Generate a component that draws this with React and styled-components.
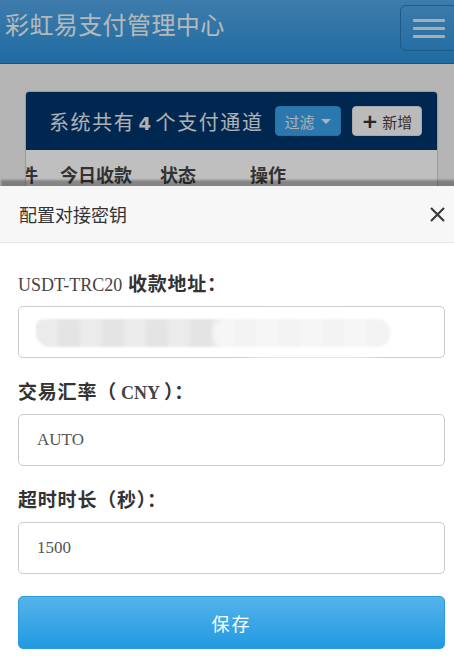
import React from "react";
import styled, { createGlobalStyle } from "styled-components";

const GlobalStyle = createGlobalStyle`
  html, body {
    margin: 0;
    padding: 0;
    overflow: hidden;
    background: #f0f0f0;
  }
  * { box-sizing: border-box; }
`;

const CJK = `"Liberation Serif", "Noto Sans CJK SC", serif`;

const Stage = styled.div`
  position: relative;
  width: 463px;
  height: 656px;
  overflow: hidden;
  background: #f0f0f0;
  font-family: ${CJK};
`;

const Navbar = styled.header`
  height: 64px;
  display: flex;
  justify-content: space-between;
  align-items: flex-start;
  padding: 0 5px;
  background: linear-gradient(#52a6e5, #2a8fd8);
  border-bottom: 1px solid #1f6fae;
`;

const Brand = styled.div`
  margin-top: 11px;
  font-size: 24px;
  line-height: 30px;
  color: #f4f6f8;
  letter-spacing: 0.4px;
`;

const Toggle = styled.button`
  margin-top: 5px;
  width: 58px;
  height: 46px;
  border: 1px solid #2378bb;
  border-radius: 6px;
  background: transparent;
  display: flex;
  flex-direction: column;
  align-items: center;
  justify-content: center;
  gap: 5px;
  padding: 0;
`;

const Bar = styled.span`
  display: block;
  width: 32px;
  height: 3px;
  border-radius: 1px;
  background: #e6e6e6;
`;

const Content = styled.main`
  padding: 27px 25px 0;
`;

const Panel = styled.section`
  border: 1px solid #cfcfcf;
  border-radius: 4px;
  background: #ffffff;
  overflow: hidden;
`;

const PanelHeading = styled.div`
  height: 58px;
  display: flex;
  align-items: center;
  gap: 11px;
  padding: 0 22px 0 23px;
  background: #00356b;
  color: #e8ecf0;
  font-size: 20px;
  white-space: nowrap;
`;

const HeadingText = styled.span`
  flex: none;
  letter-spacing: 1.6px;
`;

const Count = styled.b`
  font-family: "DejaVu Sans", sans-serif;
  font-size: 18px;
  margin: 0 3px;
`;

const SmallButton = styled.span`
  flex: none;
  height: 30px;
  display: inline-flex;
  align-items: center;
  justify-content: center;
  gap: 4px;
  padding: 0 9px;
  border-radius: 4px;
  font-size: 15px;
  background: ${(p) => (p.$light ? "#fafafa" : "#38a0e8")};
  color: ${(p) => (p.$light ? "#444" : "#e6eef6")};
  border: 1px solid ${(p) => (p.$light ? "#e0e0e0" : "#3096dc")};
`;

const Caret = styled.span`
  width: 0;
  height: 0;
  border-left: 5px solid transparent;
  border-right: 5px solid transparent;
  border-top: 5px solid currentColor;
  margin-left: 2px;
`;

const Plus = styled.b`
  font-family: "DejaVu Sans", sans-serif;
  font-size: 20px;
  line-height: 1;
  color: #333;
`;

const HeadRow = styled.div`
  display: flex;
  padding-top: 13px;
  font-size: 18px;
  font-weight: 700;
  line-height: 26px;
  color: #444;
  white-space: nowrap;
`;

/* the table is scrolled sideways, so the first column shows only its tail */
const HeadCell = styled.div`
  width: ${(p) => p.$w}px;
  flex: none;
  overflow: hidden;
  display: flex;
  justify-content: ${(p) => (p.$tail ? "flex-end" : "flex-start")};
  margin-right: ${(p) => p.$after || 0}px;
`;

const Backdrop = styled.div`
  position: absolute;
  inset: 0;
  background: rgba(0, 0, 0, 0.25);
  z-index: 1;
`;

const Sheet = styled.div`
  position: absolute;
  top: 186px;
  left: 0;
  right: 0;
  bottom: 0;
  z-index: 2;
  background: #ffffff;
  box-shadow: 0 -7px 2px -1px rgba(0, 0, 0, 0.3);
`;

const SheetHeader = styled.div`
  height: 57px;
  display: flex;
  align-items: center;
  justify-content: space-between;
  padding: 0 17px 0 19px;
  background: #f7f7f7;
  border-bottom: 1px solid #e8e8e8;
`;

const SheetTitle = styled.h4`
  margin: 0;
  font-size: 18px;
  font-weight: 400;
  color: #333;
`;

const Close = styled.button`
  width: 17px;
  height: 17px;
  padding: 0;
  border: 0;
  background: transparent;
  display: flex;
`;

const SheetBody = styled.form`
  padding: 29px 18px 0;
  display: flex;
  flex-direction: column;
  gap: 22px;
`;

const Field = styled.div`
  display: flex;
  flex-direction: column;
  gap: 8px;
`;

const Label = styled.label`
  font-size: 19px;
  line-height: 26px;
  font-weight: 700;
  color: #333;
  letter-spacing: 0.8px;
`;

const Latin = styled.span`
  font-size: 18px;
  font-weight: ${(p) => (p.$bold ? 700 : 400)};
  color: #444;
  letter-spacing: 0;
  margin: 0 ${(p) => (p.$pad ? 4 : 0)}px;
`;

const InputWrap = styled.div`
  position: relative;
`;

const Input = styled.input`
  width: 100%;
  height: 52px;
  padding: 0 18px;
  border: 1px solid #cccccc;
  border-radius: 5px;
  background: #fff;
  font-family: "Liberation Serif", serif;
  font-size: 17px;
  color: #555;
  outline: none;
`;

const Smudge = styled.span`
  position: absolute;
  left: 18px;
  top: 13px;
  width: 355px;
  height: 28px;
  border-radius: 8px 14px 14px 14px;
  background: repeating-linear-gradient(
    90deg,
    #ebebeb 0 22px,
    #e4e4e4 22px 44px
  );
  filter: blur(1.2px);
`;

const Wipe = styled.span`
  position: absolute;
  left: 195px;
  top: 2px;
  width: 195px;
  height: 54px;
  border-radius: 40% 50% 45% 45%;
  background: rgba(255, 255, 255, 0.55);
  filter: blur(2px);
`;

const SaveButton = styled.button`
  height: 53px;
  border: 1px solid #2a9be0;
  border-radius: 5px;
  background: linear-gradient(#55b4eb, #2299e1);
  color: #fff;
  font-family: ${CJK};
  font-size: 18px;
  letter-spacing: 2px;
`;

export default function App() {
  return (
    <Stage>
      <GlobalStyle />
      <Navbar>
        <Brand>彩虹易支付管理中心</Brand>
        <Toggle aria-label="menu">
          <Bar />
          <Bar />
          <Bar />
        </Toggle>
      </Navbar>

      <Content>
        <Panel>
          <PanelHeading>
            <HeadingText>
              系统共有<Count>4</Count>个支付通道
            </HeadingText>
            <SmallButton>
              过滤
              <Caret />
            </SmallButton>
            <SmallButton $light>
              <Plus>+</Plus>新增
            </SmallButton>
          </PanelHeading>
          <HeadRow>
            <HeadCell $w={12} $tail $after={22}>
              件
            </HeadCell>
            <HeadCell $w={100}>今日收款</HeadCell>
            <HeadCell $w={90}>状态</HeadCell>
            <HeadCell $w={60}>操作</HeadCell>
          </HeadRow>
        </Panel>
      </Content>

      <Backdrop />

      <Sheet>
        <SheetHeader>
          <SheetTitle>配置对接密钥</SheetTitle>
          <Close aria-label="close">
            <svg width="17" height="17" viewBox="0 0 17 17">
              <path
                d="M2 2 L15 15 M15 2 L2 15"
                stroke="#3a3a3a"
                strokeWidth="2.2"
              />
            </svg>
          </Close>
        </SheetHeader>
        <SheetBody onSubmit={(e) => e.preventDefault()}>
          <Field>
            <Label>
              <Latin>USDT-TRC20</Latin> 收款地址：
            </Label>
            <InputWrap>
              <Input defaultValue="T" />
              <Smudge />
              <Wipe />
            </InputWrap>
          </Field>
          <Field>
            <Label>
              交易汇率（<Latin $bold $pad>CNY</Latin>）：
            </Label>
            <Input defaultValue="AUTO" />
          </Field>
          <Field>
            <Label>超时时长（秒）：</Label>
            <Input defaultValue="1500" />
          </Field>
          <SaveButton type="submit">保存</SaveButton>
        </SheetBody>
      </Sheet>
    </Stage>
  );
}
